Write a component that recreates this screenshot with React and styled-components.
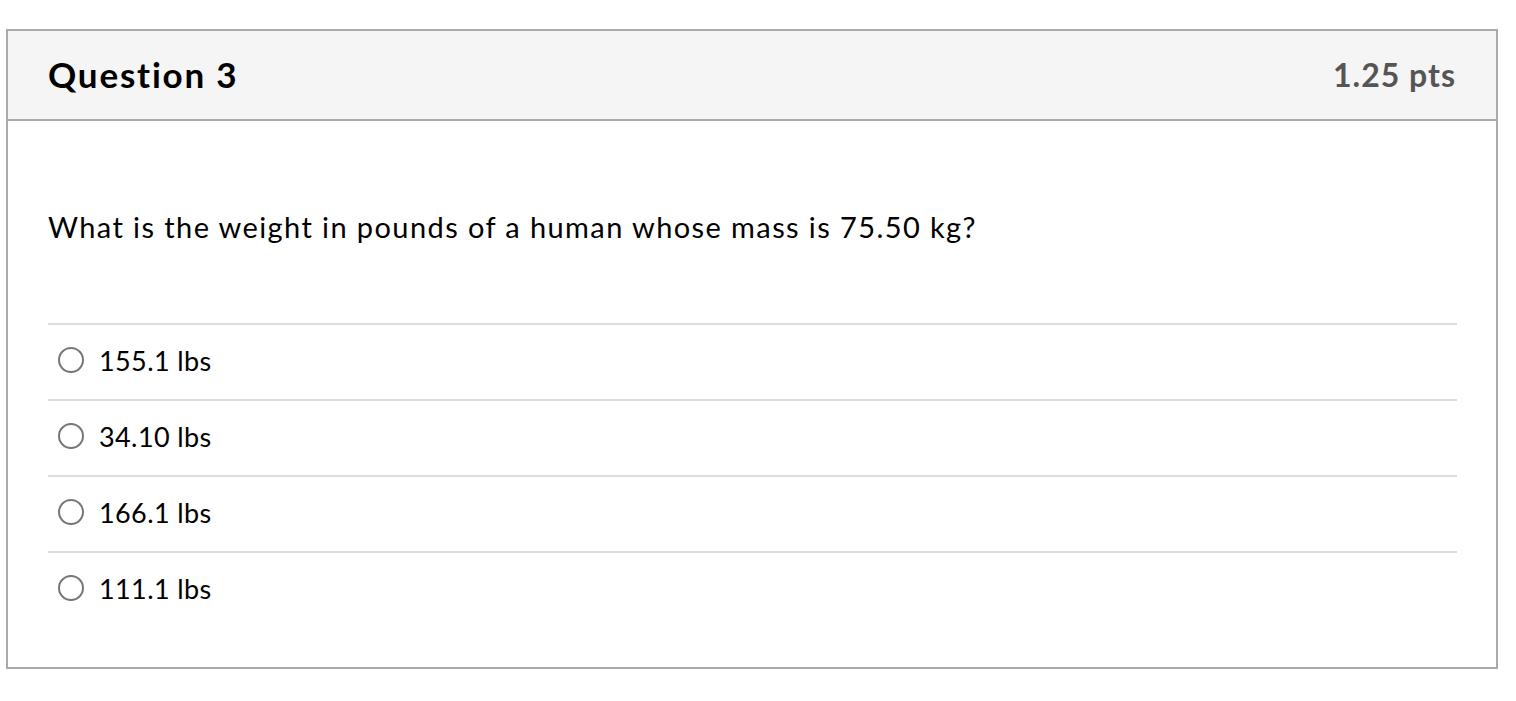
import React from 'react';
import styled, { createGlobalStyle } from 'styled-components';

const GlobalStyle = createGlobalStyle`
  body {
    margin: 0;
    background: #ffffff;
    font-family: Lato, "Open Sans", "Liberation Sans", sans-serif;
  }
`;

const Page = styled.div`
  padding: 29px 0 0 6px;
`;

const Card = styled.div`
  width: 1492px;
  box-sizing: border-box;
  border: 2px solid #aaaaaa;
`;

const Header = styled.div`
  height: 90px;
  box-sizing: border-box;
  display: flex;
  align-items: center;
  justify-content: space-between;
  padding: 0 40px 2px;
  background: #f5f5f5;
  border-bottom: 2px solid #aaaaaa;
`;

const Title = styled.h2`
  margin: 0;
  font-size: 35px;
  font-weight: 700;
  letter-spacing: 1.8px;
  color: #000000;
`;

const Points = styled.span`
  font-size: 32px;
  font-weight: 700;
  letter-spacing: 1px;
  color: #555555;
`;

const Body = styled.div`
  padding: 0 39px 40px 40px;
`;

const QuestionText = styled.p`
  margin: 0;
  padding: 88px 0 78px;
  font-size: 29px;
  line-height: 36px;
  letter-spacing: 1.4px;
  color: #000000;
`;

const Answer = styled.label`
  display: flex;
  align-items: center;
  gap: 15px;
  height: 76px;
  box-sizing: border-box;
  padding: 0 0 4px 10px;
  border-top: 2px solid #dddddd;
  font-size: 27px;
  letter-spacing: 0.4px;
  color: #000000;
`;

const Radio = styled.span`
  width: 26px;
  height: 26px;
  box-sizing: border-box;
  border: 2px solid #777777;
  border-radius: 50%;
  flex-shrink: 0;
`;

const answers = ['155.1 lbs', '34.10 lbs', '166.1 lbs', '111.1 lbs'];

export default function App() {
  return (
    <Page>
      <GlobalStyle />
      <Card>
        <Header>
          <Title>Question 3</Title>
          <Points>1.25 pts</Points>
        </Header>
        <Body>
          <QuestionText>What is the weight in pounds of a human whose mass is 75.50 kg?</QuestionText>
          {answers.map((a) => (
            <Answer key={a}>
              <Radio />
              {a}
            </Answer>
          ))}
        </Body>
      </Card>
    </Page>
  );
}
